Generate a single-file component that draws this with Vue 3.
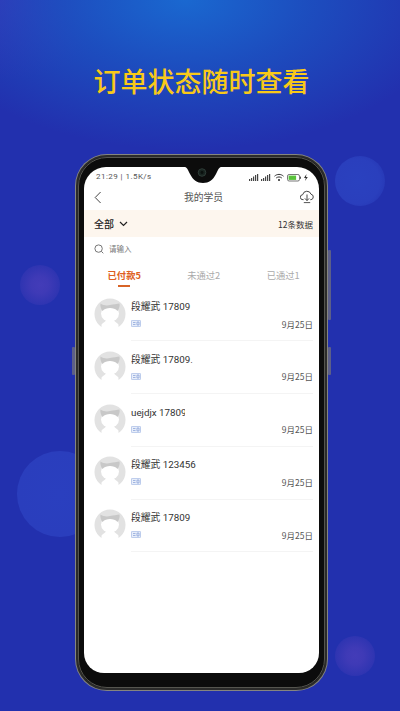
<script setup>
const tabs = [
  { label: '已付款5', active: true },
  { label: '未通过2', active: false },
  { label: '已通过1', active: false }
]
const students = [
  { id: 1, name: '段耀武 17809', clip: 70 },
  { id: 2, name: '段耀武 17809.', clip: 70 },
  { id: 3, name: 'uejdjx 17809', clip: 54 },
  { id: 4, name: '段耀武 123456', clip: 80 },
  { id: 5, name: '段耀武 17809', clip: 70 }
]
</script>

<template>
  <div class="page">
    <span class="blob blob-a"></span>
    <span class="blob blob-b"></span>
    <span class="blob blob-c"></span>
    <span class="blob blob-d"></span>
    <h1 class="headline">订单状态随时查看</h1>
    <div class="phone">
      <span class="key key-l"></span>
      <span class="key key-r1"></span>
      <span class="key key-r2"></span>
      <div class="bezel">
        <svg class="notch" width="48" height="17" viewBox="0 0 48 17">
          <path d="M0 0C8 0 8 2 11 8c3 6 7 9 13 9s10-3 13-9c3-6 3-8 11-8z" fill="#0c0c0c" />
          <circle cx="23" cy="6.500" r="3.800" fill="#18231f" stroke="#33433d" stroke-width=".8" />
          <circle cx="23" cy="6.500" r="1.400" fill="#0a0f0d" />
        </svg>
        <div class="screen">
          <div class="status">
            <span class="status-text">21:29 | 1.5K/s</span>
            <svg class="status-icons" width="61" height="9" viewBox="0 0 61 9">
              <g fill="#444">
                <rect x="0" y="6" width="1.2" height="2" /><rect x="2" y="5" width="1.2" height="3" />
                <rect x="4" y="3.5" width="1.2" height="4.5" /><rect x="6" y="2" width="1.2" height="6" />
                <rect x="8" y="1" width="1.2" height="7" />
                <rect x="12" y="6" width="1.2" height="2" /><rect x="14" y="5" width="1.2" height="3" />
                <rect x="16" y="3.5" width="1.2" height="4.5" /><rect x="18" y="2" width="1.2" height="6" />
                <rect x="20" y="1" width="1.2" height="7" />
              </g>
              <g fill="none" stroke="#333" stroke-width="1">
                <path d="M25.5 3.2c2.6-2.4 6.4-2.4 9 0" /><path d="M27.2 5c1.7-1.4 3.9-1.4 5.6 0" />
              </g>
              <circle cx="30" cy="7" r="1.1" fill="#333" />
              <rect x="38.5" y="1.500" width="12" height="6.500" rx="1.600" fill="#fff" stroke="#555" stroke-width=".8" />
              <rect x="39.600" y="2.600" width="7.500" height="4.300" fill="#58c23a" />
              <rect x="51" y="3.600" width="1" height="2.200" fill="#555" />
              <path d="M57.500 1 55 5h1.800L56 8l2.800-4H57z" fill="#333" />
            </svg>
          </div>
          <div class="nav">
            <svg class="back" width="8" height="13" viewBox="0 0 8 13"><path d="M6.600 1 1.200 6.500l5.400 5.500" fill="none" stroke="#444" stroke-width="1" /></svg>
            <span class="nav-title">我的学员</span>
            <svg class="cloud" width="14" height="14" viewBox="0 0 14 14">
              <path d="M3.600 9.700H3a2.500 2.500 0 0 1-.3-5A4.300 4.300 0 0 1 11 4.200a2.800 2.800 0 0 1 0 5.500h-.7" fill="none" stroke="#333" stroke-width=".9" />
              <path d="M7 4.500v6M4.900 8.400 7 10.600l2.100-2.200" fill="none" stroke="#333" stroke-width=".9" />
              <path d="M3.800 12.600h6.400" stroke="#555" stroke-width="1" />
            </svg>
          </div>
          <div class="filter">
            <span class="filter-all">全部</span>
            <svg width="9" height="6" viewBox="0 0 9 6"><path d="m1 1 3.500 3.500L8 1" fill="none" stroke="#222" stroke-width="1.200" /></svg>
            <span class="filter-count">12条数据</span>
          </div>
          <div class="search">
            <svg width="10" height="10" viewBox="0 0 10 10"><circle cx="4.600" cy="4.600" r="3.700" fill="none" stroke="#666" stroke-width=".9" /><path d="m7.400 7.400 1.900 1.900" stroke="#666" stroke-width=".9" /></svg>
            <span class="search-hint">请输入</span>
          </div>
          <div class="tabs">
            <div v-for="tab in tabs" :key="tab.label" class="tab" :class="{ active: tab.active }">{{ tab.label }}</div>
          </div>
          <ul class="list">
            <li v-for="s in students" :key="s.id" class="row">
              <svg class="avatar" width="32" height="32" viewBox="0 0 32 32">
                <circle cx="16" cy="16" r="15.500" fill="#e2e2e2" />
                <ellipse cx="16" cy="15.500" rx="9" ry="8" fill="#fff" />
                <path d="M6.500 5.500c3 2 6 2.400 9.500 1.600s7-1.200 9.500-1.600c.6 2.800-.6 5.500-2 7.500-2-2.200-4.500-3-7.500-3s-5.500.8-7.500 3c-1.400-2-2.600-4.700-2-7.500z" fill="#c8c8c8" />
                <path d="M12.500 20h7c.4 2.600 1.400 4 4 5.500.9.500 1.400 1.500.8 2.500L27 33H5l2.700-5c-.6-1-.1-2 .8-2.500 2.600-1.500 3.600-2.900 4-5.500z" fill="#fff" />
              </svg>
              <div class="info">
                <div class="name" :style="{ maxWidth: s.clip + 'px' }">{{ s.name }}</div>
                <div class="meta">
                  <svg class="tag" width="10" height="7" viewBox="0 0 10 7">
                    <rect x=".4" y=".4" width="9.200" height="6.200" rx=".8" fill="#e8eefa" stroke="#9db4e2" stroke-width=".7" />
                    <path d="M2 2.500h2.500M2 4.500h2.500M6 2v3h2V2z" fill="none" stroke="#6f8fd0" stroke-width=".6" />
                  </svg>
                  <span class="date">9月25日</span>
                </div>
              </div>
            </li>
          </ul>
        </div>
      </div>
    </div>
  </div>
</template>

<style scoped>
.page {
  position: relative;
  width: 400px;
  height: 711px;
  overflow: hidden;
  background:
    radial-gradient(ellipse 270px 150px at 185px 0, #1a68d0 0%, rgba(27, 85, 195, .8) 45%, rgba(34, 48, 174, 0) 100%),
    radial-gradient(ellipse 120px 80px at 0 0, #3a2cb2 0%, rgba(58, 44, 178, 0) 100%),
    #2230ae;
  font-family: "Noto Sans CJK SC", "Noto Sans", sans-serif;
}
.blob {
  position: absolute;
  border-radius: 50%;
}
.blob-a {
  left: 335px; top: 156px; width: 50px; height: 50px;
  background: radial-gradient(circle at 45% 50%, #2a41bf 0%, #2a3fbd 60%, rgba(42, 63, 189, 0) 100%);
}
.blob-b {
  left: 20px; top: 265px; width: 40px; height: 40px;
  background: radial-gradient(circle, #433cb8 0%, #3f3ab6 30%, rgba(63, 58, 182, 0) 100%);
}
.blob-c {
  left: 17px; top: 451px; width: 86px; height: 86px;
  background: radial-gradient(circle, #2a3fbf 0%, #2a3ebd 70%, rgba(42, 62, 189, 0) 100%);
}
.blob-d {
  left: 335px; top: 636px; width: 40px; height: 40px;
  background: radial-gradient(circle, #433cb8 0%, #3f3ab6 30%, rgba(63, 58, 182, 0) 100%);
}
.headline {
  position: relative;
  margin: 0;
  padding: 66px 0 0 3px;
  text-align: center;
  font-size: 27px;
  line-height: 29px;
  font-weight: 500;
  color: #f8c919;
}
.phone {
  position: relative;
  width: 253px;
  height: 537px;
  margin: 59px 0 0 75px;
  box-sizing: border-box;
  padding: 1px;
  border-radius: 32px;
  background: #85857f;
}
.key {
  position: absolute;
  width: 3px;
  background: #5c5f88;
  border-radius: 1px;
}
.key-l { left: -3px; top: 193px; height: 28px; }
.key-r1 { right: -3px; top: 96px; height: 70px; }
.key-r2 { right: -3px; top: 193px; height: 28px; }
.bezel {
  position: relative;
  height: 100%;
  box-sizing: border-box;
  padding: 10px 6px 15px;
  border: 2px solid #2b2b2a;
  border-radius: 31px;
  background: #0c0c0c;
  outline: 1px solid #55554f;
  outline-offset: -3px;
}
.notch {
  position: absolute;
  left: 100.500px;
  top: 9px;
  z-index: 1;
}
.screen {
  height: 100%;
  overflow: hidden;
  background: #fff;
  border-radius: 22px 22px 20px 20px;
}
.status {
  height: 17px;
  padding: 3px 9px 0 12px;
  box-sizing: border-box;
  display: flex;
  align-items: center;
  justify-content: space-between;
}
.status-text {
  font-size: 8px;
  letter-spacing: .45px;
  color: #555;
  line-height: 10px;
  font-family: "Roboto", sans-serif;
}
.nav {
  position: relative;
  height: 26px;
  display: flex;
  align-items: center;
  justify-content: center;
  padding-left: 4px;
}
.back { position: absolute; left: 10px; top: 7px; }
.cloud { position: absolute; right: 5px; top: 6px; }
.nav-title {
  font-size: 9.800px;
  color: #555;
}
.filter {
  height: 27px;
  display: flex;
  align-items: center;
  gap: 5px;
  padding: 0 6px 0 10px;
  background: #fdf6ee;
}
.filter-all {
  font-size: 10px;
  font-weight: 500;
  color: #222;
}
.filter-count {
  margin-left: auto;
  font-size: 8.500px;
  color: #333;
}
.search {
  height: 25px;
  display: flex;
  align-items: center;
  gap: 5px;
  padding: 0 0 2px 10px;
  box-sizing: border-box;
}
.search-hint {
  font-size: 7.500px;
  color: #777;
}
.tabs {
  height: 26px;
  display: flex;
  width: 238.500px;
  margin-left: .5px;
}
.tab {
  position: relative;
  flex: 1;
  text-align: center;
  font-size: 9.300px;
  line-height: 26px;
  color: #aaa;
}
.tab.active {
  color: #de5f22;
  font-weight: 700;
}
.tab.active::after {
  content: "";
  position: absolute;
  left: 33.500px;
  bottom: 1px;
  width: 12px;
  height: 2px;
  background: #d86427;
}
.list {
  margin: 0;
  padding: 0;
  list-style: none;
}
.row {
  height: 52.800px;
  box-sizing: border-box;
  display: flex;
  padding: 10px 6px 0 10px;
}
.avatar {
  flex: none;
}
.info {
  flex: 1;
  margin-left: 5px;
  margin-top: -3px;
  height: 45.300px;
  border-bottom: 1px solid #f4f4f4;
  min-width: 0;
}
.name {
  font-size: 9.800px;
  line-height: 16px;
  margin-top: 4px;
  color: #333;
  white-space: nowrap;
  overflow: hidden;
  font-family: "Roboto", "Noto Sans CJK SC", sans-serif;
}
.meta {
  display: flex;
  align-items: center;
  justify-content: space-between;
  height: 12px;
  margin-top: 2.500px;
}
.date {
  font-size: 8.500px;
  line-height: 12px;
  color: #555;
}
</style>
